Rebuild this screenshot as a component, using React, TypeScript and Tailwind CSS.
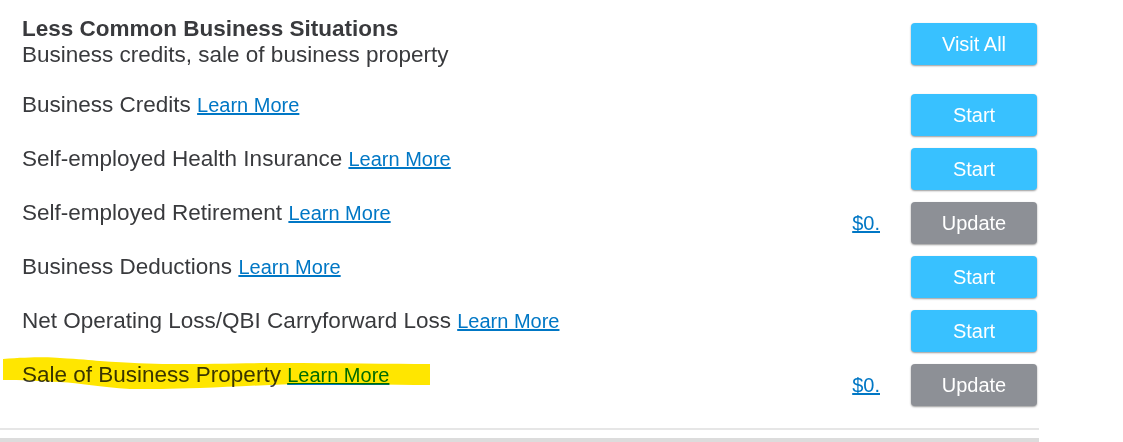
import React from "react";

type Row = {
  label: string;
  amount?: string;
  action: "Start" | "Update";
};

const rows: Row[] = [
  { label: "Business Credits", action: "Start" },
  { label: "Self-employed Health Insurance", action: "Start" },
  { label: "Self-employed Retirement", amount: "$0.", action: "Update" },
  { label: "Business Deductions", action: "Start" },
  { label: "Net Operating Loss/QBI Carryforward Loss", action: "Start" },
  { label: "Sale of Business Property", amount: "$0.", action: "Update" },
];

const ActionButton = ({ label, gray }: { label: string; gray?: boolean }) => (
  <button
    className={`w-[126px] h-[42px] rounded-[4px] text-white text-[20px] leading-none shadow-[0_1px_2px_rgba(0,0,0,0.4)] font-['Liberation_Sans',Arial,sans-serif] ${
      gray ? "bg-[#8d9096]" : "bg-[#38c1ff]"
    }`}
  >
    {label}
  </button>
);

const Highlight = () => (
  <svg
    className="absolute left-0 top-[355px] mix-blend-multiply pointer-events-none"
    width="440"
    height="40"
    viewBox="0 0 440 40"
  >
    <path
      d="M3 4 C 30 2, 50 2, 60 3 C 80 4, 90 5, 100 6 C 130 8, 150 9, 170 9 C 210 9, 250 8, 280 8 C 340 8, 390 9, 430 9 L 430 30 C 390 30, 340 29, 300 29 C 260 30, 230 32, 200 33 C 170 34, 150 34, 130 34 C 100 32, 80 28, 60 27 C 40 26, 20 25, 3 25 Z"
      fill="#ffe600"
    />
  </svg>
);

export default function App() {
  return (
    <div className="relative w-[1039px] bg-white text-[#393a3d] font-['Liberation_Sans',Arial,sans-serif]">
      <div className="pl-[22px] pr-[2px] pt-[16px]">
        <div className="flex items-start justify-between">
          <div className="text-[22.5px] leading-[26px]">
            <h2 className="font-bold">Less Common Business Situations</h2>
            <p>Business credits, sale of business property</p>
          </div>
          <div className="mt-[7px]">
            <ActionButton label="Visit All" />
          </div>
        </div>

        <div className="mt-[26px] flex flex-col gap-[12px]">
          {rows.map((r) => (
            <div key={r.label} className="flex items-start justify-between h-[42px]">
              <div className="text-[22.5px] leading-[22px]">
                {r.label}{" "}
                <a href="#" className="text-[20px] text-[#0077c5] underline">
                  Learn More
                </a>
              </div>
              <div className="flex items-center gap-[31px]">
                {r.amount && (
                  <a href="#" className="text-[20px] text-[#0077c5] underline">
                    {r.amount}
                  </a>
                )}
                <ActionButton label={r.action} gray={r.action === "Update"} />
              </div>
            </div>
          ))}
        </div>
      </div>

      <div className="mt-[22px] h-[2px] bg-[#e6e6e6]" />
      <div className="mt-[8px] h-[10px] bg-[#dcdcdc]" />

      <Highlight />
    </div>
  );
}
